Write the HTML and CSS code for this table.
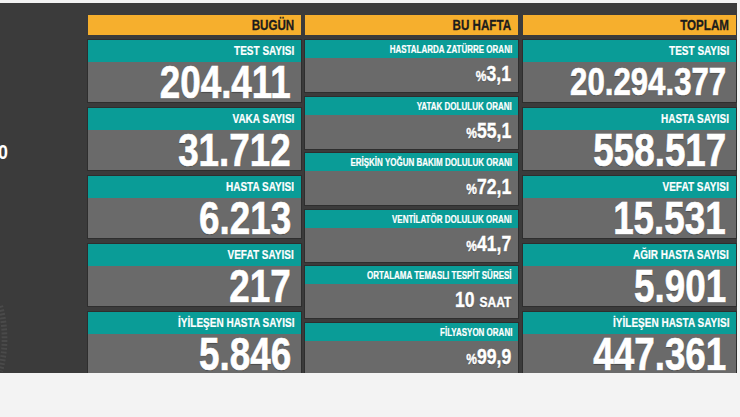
FILE: index.html
```html
<!DOCTYPE html>
<html lang="tr">
<head>
<meta charset="utf-8">
<title>Koronavirüs Tablosu</title>
<link rel="stylesheet" href="styles.css">
</head>
<body>
<div class="page">
  <div class="panel">
    <aside class="side">
      <span class="side-num">0</span>
      <svg class="side-dial" width="10" height="72" viewBox="0 0 10 72">
        <path d="M0 2 Q9 36 0 70" fill="none" stroke="#4a4a4a" stroke-width="6" stroke-dasharray="2 2"/>
      </svg>
    </aside>
    <section class="col big">
      <div class="head"><span class="t">BUGÜN</span></div>
      <div class="card"><div class="lbl"><span class="t">TEST SAYISI</span></div><div class="val"><span class="t">204.411</span></div></div>
      <div class="card"><div class="lbl"><span class="t">VAKA SAYISI</span></div><div class="val"><span class="t">31.712</span></div></div>
      <div class="card"><div class="lbl"><span class="t">HASTA SAYISI</span></div><div class="val"><span class="t">6.213</span></div></div>
      <div class="card"><div class="lbl"><span class="t">VEFAT SAYISI</span></div><div class="val"><span class="t">217</span></div></div>
      <div class="card"><div class="lbl"><span class="t">İYİLEŞEN HASTA SAYISI</span></div><div class="val"><span class="t">5.846</span></div></div>
    </section>
    <section class="col small">
      <div class="head"><span class="t">BU HAFTA</span></div>
      <div class="card"><div class="lbl"><span class="t">HASTALARDA ZATÜRRE ORANI</span></div><div class="val"><span class="t"><span class="unit">%</span>3,1</span></div></div>
      <div class="card"><div class="lbl"><span class="t">YATAK DOLULUK ORANI</span></div><div class="val"><span class="t"><span class="unit">%</span>55,1</span></div></div>
      <div class="card"><div class="lbl"><span class="t">ERİŞKİN YOĞUN BAKIM DOLULUK ORANI</span></div><div class="val"><span class="t"><span class="unit">%</span>72,1</span></div></div>
      <div class="card"><div class="lbl"><span class="t">VENTİLATÖR DOLULUK ORANI</span></div><div class="val"><span class="t"><span class="unit">%</span>41,7</span></div></div>
      <div class="card"><div class="lbl"><span class="t">ORTALAMA TEMASLI TESPİT SÜRESİ</span></div><div class="val"><span class="t">10 <span class="unit saat">SAAT</span></span></div></div>
      <div class="card"><div class="lbl"><span class="t">FİLYASYON ORANI</span></div><div class="val"><span class="t"><span class="unit">%</span>99,9</span></div></div>
    </section>
    <section class="col big">
      <div class="head"><span class="t">TOPLAM</span></div>
      <div class="card"><div class="lbl"><span class="t">TEST SAYISI</span></div><div class="val long"><span class="t">20.294.377</span></div></div>
      <div class="card"><div class="lbl"><span class="t">HASTA SAYISI</span></div><div class="val"><span class="t">558.517</span></div></div>
      <div class="card"><div class="lbl"><span class="t">VEFAT SAYISI</span></div><div class="val"><span class="t">15.531</span></div></div>
      <div class="card"><div class="lbl"><span class="t">AĞIR HASTA SAYISI</span></div><div class="val"><span class="t">5.901</span></div></div>
      <div class="card"><div class="lbl"><span class="t">İYİLEŞEN HASTA SAYISI</span></div><div class="val"><span class="t">447.361</span></div></div>
    </section>
  </div>
</div>
</body>
</html>
```
FILE: styles.css
```css
html, body {
  margin: 0;
  padding: 0;
  background: #f3f3f3;
}
.page {
  width: 740px;
  height: 417px;
  overflow: hidden;
  padding-top: 3px;
  box-sizing: border-box;
}
.panel {
  width: 737px;
  height: 370px;
  background: #3b3b3b;
  display: flex;
  overflow: hidden;
  font-family: "Liberation Sans", Arial, sans-serif;
  font-weight: bold;
}
.t {
  display: inline-block;
  white-space: nowrap;
  transform: scaleX(0.8);
  transform-origin: 100% 50%;
}
.side {
  width: 88px;
  flex: none;
  display: flex;
  flex-direction: column;
  align-items: flex-start;
}
.side-num {
  margin-top: 137px;
  margin-left: -3px;
  color: #fff;
  font-size: 21px;
  line-height: 24px;
  transform: scaleX(0.85);
}
.side-dial {
  margin-top: 140px;
}
.col {
  width: 213px;
  flex: none;
  display: flex;
  flex-direction: column;
  padding-top: 12px;
}
.col.small {
  margin: 0 5px 0 4px;
}
.head {
  height: 20px;
  background: #f6af2d;
  color: #1c1c1c;
  text-align: right;
  padding-right: 7px;
  font-size: 14.5px;
  line-height: 21px;
  margin-bottom: 5px;
  flex: none;
  white-space: nowrap;
  -webkit-text-stroke: 0.3px #1c1c1c;
}
.card {
  flex: none;
  display: flex;
  flex-direction: column;
  background: #6a6a6a;
  box-shadow: 0 0 0 1px #2e2e2e;
  color: #fff;
  text-align: right;
}
.lbl {
  background: #0a9c97;
  padding-right: 7px;
  flex: none;
  white-space: nowrap;
  -webkit-text-stroke: 0.2px #fff;
}
.val {
  flex: 1;
  white-space: nowrap;
  text-shadow: 0 1px 1px rgba(0,0,0,0.35);
  -webkit-text-stroke: 0.7px #fff;
}
.big .card {
  height: 62px;
  margin-bottom: 6px;
}
.big .lbl {
  height: 22px;
  font-size: 12.5px;
  line-height: 23px;
}
.big .val {
  font-size: 46px;
  line-height: 40px;
  padding-right: 10px;
}
.big .val.long {
  font-size: 39px;
}
.small .card {
  height: 52px;
  margin-bottom: 4.6px;
}
.small .lbl {
  height: 18px;
  font-size: 10px;
  line-height: 19px;
  padding-right: 6px;
}
.small .val {
  font-size: 22px;
  line-height: 32px;
  padding-right: 7px;
  -webkit-text-stroke: 0.4px #fff;
}
.unit {
  font-size: 15px;
}
.unit.saat {
  font-size: 15px;
}
```
